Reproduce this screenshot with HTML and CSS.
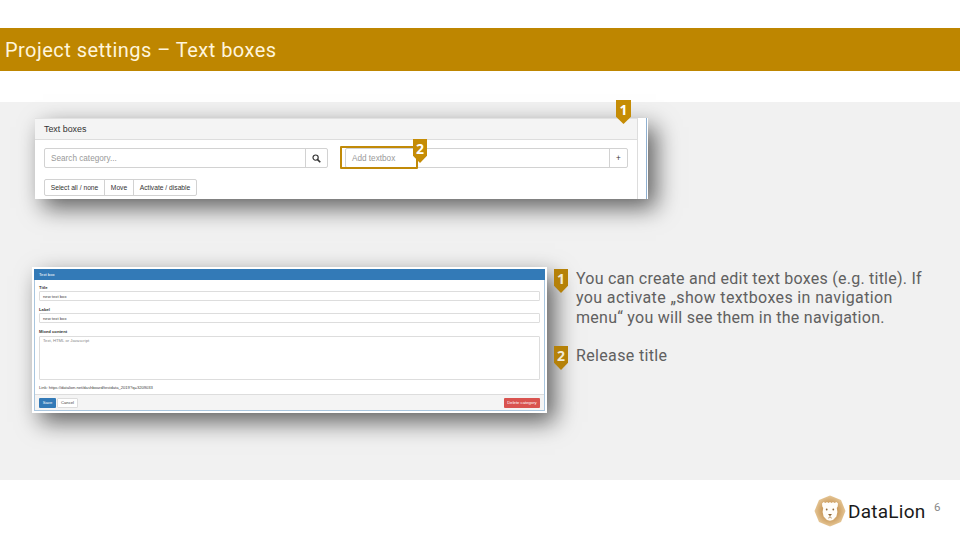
FILE: index.html
```
<!DOCTYPE html>
<html lang="en">
<head>
<meta charset="utf-8">
<title>Project settings – Text boxes</title>
<link rel="stylesheet" href="styles.css">
</head>
<body>
<main class="slide">
  <header class="title-bar"><h1>Project settings – Text boxes</h1></header>
  <section class="stage">
    <div class="list-shot">
      <div class="list-panel">
        <div class="list-heading">Text boxes</div>
        <div class="fields">
          <div class="group search"><div class="input">Search category...</div><div class="addon"><svg viewBox="0 0 10 10" width="9" height="9"><circle cx="4" cy="4" r="2.9" fill="none" stroke="#333" stroke-width="1.300"/><path d="M6.200 6.200l3 3" stroke="#333" stroke-width="1.800"/></svg></div></div>
          <div class="group add"><div class="input">Add textbox</div><div class="addon plus">+</div><i class="highlight"></i></div>
        </div>
        <div class="actions"><span class="a1">Select all / none</span><span class="a2">Move</span><span class="a3">Activate / disable</span></div>
      </div>
      <b class="badge pin-one">1</b>
      <b class="badge pin-two">2</b>
    </div>
    <div class="row">
      <div class="form-shot">
        <div class="form-panel">
          <div class="form-heading">Text box</div>
          <div class="form-body">
            <div class="label">Title</div><div class="field">new text box</div>
            <div class="label">Label</div><div class="field">new text box</div>
            <div class="label">Mixed content</div><div class="field area">Text, HTML or Javascript</div>
            <div class="link">Link: https://datalion.net/dashboard/testdata_2019?q=3209033</div>
          </div>
          <div class="form-footer"><span class="btn save">Save</span><span class="btn cancel">Cancel</span><span class="btn delete">Delete category</span></div>
        </div>
      </div>
      <div class="notes">
        <div class="note"><b class="badge dim">1</b><p><span class="l1">You can create and edit text boxes (e.g. title). If</span><span class="l2">you activate „show textboxes in navigation</span><span class="l3">menu“ you will see them in the navigation.</span></p></div>
        <div class="note"><b class="badge dim">2</b><p><span class="l4">Release title</span></p></div>
      </div>
    </div>
  </section>
  <footer class="footer">
    <svg class="logo" viewBox="0 0 32 32" width="32" height="32">
      <defs><radialGradient id="g"><stop offset="0" stop-color="#b9813c"/><stop offset=".6" stop-color="#d0a468"/><stop offset="1" stop-color="#e6c797"/></radialGradient></defs>
      <path d="M16 .5L27 5l4.500 11L27 27l-11 4.500L5 27 .5 16 5 5z" fill="url(#g)"/>
      <path d="M8 8.500L9.500 7l2 1L13 7l1.500 1L16 7l1.500 1L19 7l1.500 1 2-1L24 8.500l-.3 3-.9 1.500.6 4-1 4.500-1.900 2-1.500 1.500-3 .8-3-.8-1.500-1.500-1.900-2-1-4.500.6-4-.9-1.500z" fill="#fffdf8"/>
      <circle cx="12.700" cy="14.500" r=".9" fill="#8e6838"/><circle cx="19.300" cy="14.500" r=".9" fill="#8e6838"/>
      <path d="M14 19h4l-2 2.300z" fill="#8e6838"/>
      <path d="M16 21v1.300M14 23.200l2-.8 2 .8" fill="none" stroke="#b08a58" stroke-width=".7"/>
    </svg>
    <span class="brand">DataLion</span>
    <span class="page">6</span>
  </footer>
</main>
</body>
</html>
```
FILE: styles.css
```
* { box-sizing: border-box; }
body { margin: 0; background: #fff; }
.slide { width: 960px; height: 540px; overflow: hidden; display: flex; flex-direction: column; padding-top: 28px; font-family: Roboto, "Open Sans", sans-serif; }
.title-bar { height: 43px; flex: none; background: #be8600; display: flex; align-items: center; padding-left: 5px; }
h1 { margin: 0; font-size: 20px; font-weight: 400; color: #fff5dc; letter-spacing: .46px; white-space: nowrap; }
.stage { height: 378px; flex: none; margin-top: 31px; background: #f1f1f1; padding-top: 16px; }
.list-shot, .form-shot { background: #fff; box-shadow: 8px 9px 22px 0 rgba(0,0,0,.6); font-family: "Liberation Sans", sans-serif; }
.list-shot { position: relative; width: 613px; height: 81px; margin-left: 35px; padding-right: 9px; border-right: 1px solid #fff; background: linear-gradient(to left, #8fb0d0 1px, #fff 1px); }
.list-panel { height: 81px; border-right: 1px solid #ddd; border-top: 1px solid #e2e2e2; }
.list-heading { height: 21px; background: #f4f4f4; border-bottom: 1px solid #ddd; font-size: 8.900px; line-height: 20px; padding-left: 9px; color: #333; }
.fields { display: flex; gap: 17px; padding: 8px 0 0 9px; }
.group { display: flex; height: 20px; border: 1px solid #d2d2d2; border-radius: 2px; position: relative; font-size: 8.200px; color: #999; line-height: 19px; }
.search { width: 284px; }
.add { width: 283px; }
.input { flex: 1; padding-left: 6px; }
.addon { width: 22px; border-left: 1px solid #d2d2d2; display: flex; align-items: center; justify-content: center; }
.plus { width: 18px; color: #333; }
.highlight { position: absolute; left: -6px; top: -3px; width: 78px; height: 23px; border: 2px solid #c18a08; border-radius: 1px; }
.actions { display: flex; width: 153px; height: 17px; margin: 11px 0 0 9px; border: 1px solid #d2d2d2; border-radius: 2px; font-size: 6.700px; line-height: 15px; color: #333; text-align: center; white-space: nowrap; }
.a1 { width: 59px; }
.a2 { width: 30px; border-left: 1px solid #d2d2d2; border-right: 1px solid #d2d2d2; }
.a3 { flex: 1; }
.badge { width: 14px; height: 24px; background: #c58c05; clip-path: polygon(0 0, 100% 0, 100% 70%, 50% 100%, 0 70%); color: #fff; font: 700 14px/20px "Open Sans", sans-serif; text-align: center; }
.pin-one { position: absolute; left: 581px; top: -18px; width: 15px; }
.pin-two { position: absolute; left: 378px; top: 21px; }
.row { display: flex; margin: 68px 0 0 32px; }
.form-shot { width: 515px; height: 146px; padding: 2px; flex: none; }
.form-panel { height: 142px; border: 1px solid #a9c6df; border-top: 0; font-size: 4.200px; color: #444; display: flex; flex-direction: column; }
.form-heading { height: 11px; margin: 0 -1px; background: #337ab7; color: #fff; line-height: 11px; padding-left: 5px; }
.form-body { flex: 1; padding: 4px 4px 0; }
.label { height: 7px; line-height: 7px; font-weight: 700; color: #333; }
.field { height: 10px; border: 1px solid #ddd; border-radius: 1px; padding-left: 3px; line-height: 9px; margin-bottom: 5px; }
.area { height: 44px; color: #888; line-height: 8px; margin-top: 1px; }
.link { line-height: 6px; letter-spacing: -.04px; }
.form-footer { height: 16px; background: #f4f4f4; border-top: 1px solid #ddd; padding: 3px 4px 0; display: flex; gap: 1px; }
.btn { height: 10px; line-height: 9px; border-radius: 1px; text-align: center; color: #fff; }
.save { width: 17px; background: #337ab7; }
.cancel { width: 21px; background: #fff; border: 1px solid #ddd; color: #444; line-height: 8px; }
.delete { width: 36px; margin-left: auto; background: #d9534f; }
.notes { margin: 2px 0 0 7px; position: relative; }
.note { display: flex; height: 77px; }
.dim { background: #b58108; color: #f0ead9; }
.note p { margin: 0 0 0 8px; font-size: 16px; line-height: 19.400px; color: #606060; white-space: nowrap; }
.note span { display: block; }
.l1 { letter-spacing: .24px; }
.l2 { letter-spacing: .37px; }
.l3 { letter-spacing: .26px; }
.l4 { letter-spacing: .35px; }
.footer { flex: 1; display: flex; padding: 15px 0 0 814px; }
.brand { font-size: 19px; line-height: 33px; margin-left: 2px; width: 78px; color: #1a1a1a; letter-spacing: .25px; }
.page { font-size: 11.500px; line-height: 24px; margin-left: 8px; color: #888; }
```
